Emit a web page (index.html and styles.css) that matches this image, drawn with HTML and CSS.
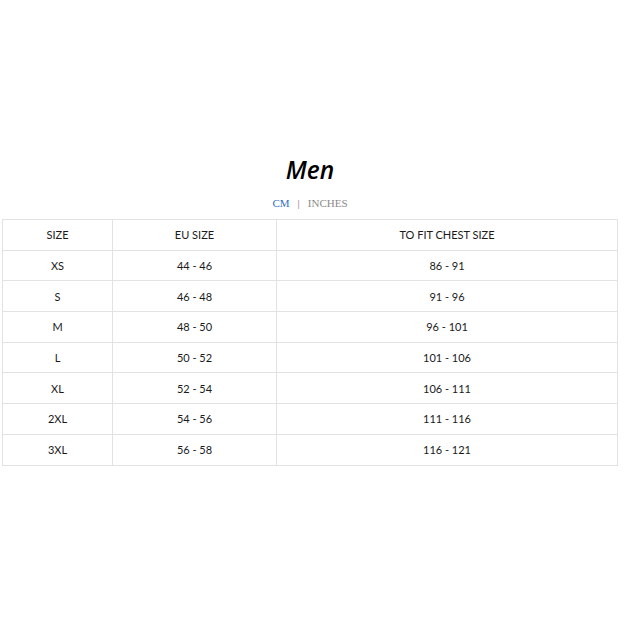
FILE: index.html
```html
<!DOCTYPE html>
<html>
<head>
<meta charset="utf-8">
<link rel="stylesheet" href="styles.css">
</head>
<body>
<div class="page">
  <h1 class="title">Men</h1>
  <div class="units"><span class="unit active">CM</span><span class="sep">|</span><span class="unit">INCHES</span></div>
  <table class="chart">
    <thead>
      <tr><th class="c1">SIZE</th><th class="c2">EU SIZE</th><th>TO FIT CHEST SIZE</th></tr>
    </thead>
    <tbody>
      <tr><td>XS</td><td>44 - 46</td><td>86 - 91</td></tr>
      <tr><td>S</td><td>46 - 48</td><td>91 - 96</td></tr>
      <tr><td>M</td><td>48 - 50</td><td>96 - 101</td></tr>
      <tr><td>L</td><td>50 - 52</td><td>101 - 106</td></tr>
      <tr><td>XL</td><td>52 - 54</td><td>106 - 111</td></tr>
      <tr><td>2XL</td><td>54 - 56</td><td>111 - 116</td></tr>
      <tr><td>3XL</td><td>56 - 58</td><td>116 - 121</td></tr>
    </tbody>
  </table>
</div>
</body>
</html>
```
FILE: styles.css
```css
html, body { margin: 0; padding: 0; background: #fff; }
.page { padding: 156px 6px 0 2px; }
.title {
  margin: 0;
  text-align: center;
  font-family: "Open Sans", "DejaVu Sans", sans-serif;
  font-style: italic;
  font-weight: 600;
  font-size: 24.5px;
  line-height: 28px;
  color: #000;
}
.units {
  margin-top: 13px;
  text-align: center;
  font-family: "Liberation Serif", serif;
  font-size: 11px;
  line-height: 12px;
  height: 12px;
  color: #8a8a8a;
}
.unit.active { color: #2f6fc0; }
.sep { margin: 0 8px; color: #777; }
.chart {
  margin-top: 10px;
  width: 616px;
  border-collapse: collapse;
  font-family: "Lato", "Open Sans", sans-serif;
  font-size: 11px;
  color: #1a1a1a;
}
.chart th, .chart td {
  border: 1px solid #e2e2e2;
  height: 29.7px;
  padding: 0;
  text-align: center;
  font-weight: 400;
}
.c1 { width: 109px; }
.c2 { width: 163px; }
```
